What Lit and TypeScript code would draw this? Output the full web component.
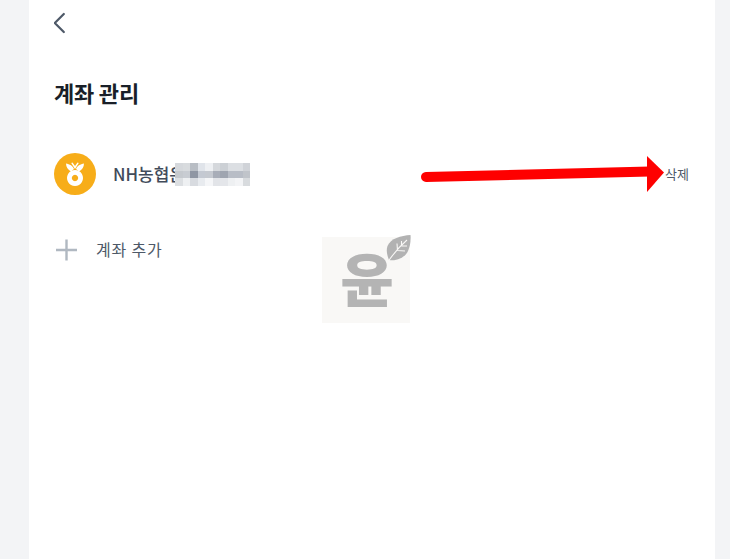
import { LitElement, html, css, svg } from "lit";
import { customElement } from "lit/decorators.js";

const MOSAIC = [
  ["#d5d8dc", "#d8dbde", "#b8bdc4", "#e0e4ea", "#eef0f3", "#d5d8dc", "#ccd0d5", "#dcdfe3", "#dcdfe3", "#d0d3d8"],
  ["#c5c9ce", "#c8ccd2", "#8f96a3", "#c4c9d2", "#c5c9d0", "#a8adb8", "#9fa5b0", "#b8bdc6", "#b8bdc6", "#c0c4ca"],
  ["#dcdfe2", "#eef0f2", "#d8dbe0", "#e8ebef", "#f5f6f8", "#e2e4e8", "#e4e6ea", "#eef0f2", "#f3f4f6", "#d8dbde"],
];

@customElement("app-root")
export class AppRoot extends LitElement {
  static styles = css`
    :host {
      display: block;
      height: 559px;
      overflow: hidden;
      position: relative;
      background: #f3f4f6;
      font-family: "Noto Sans CJK KR", "Noto Sans", sans-serif;
    }
    .panel {
      margin: 0 15px 0 29px;
      height: 559px;
      box-sizing: border-box;
      background: #fff;
      padding: 12px 26px 0 25px;
      display: flex;
      flex-direction: column;
    }
    .back {
      display: block;
      width: 12px;
      height: 22px;
    }
    .title {
      margin: 43px 0 0;
      font-size: 22px;
      line-height: 30px;
      font-weight: 700;
      letter-spacing: -0.2px;
      color: #191f28;
    }
    .account {
      margin-top: 46px;
      display: flex;
      align-items: center;
      height: 42px;
    }
    .bank {
      width: 42px;
      height: 42px;
      flex: none;
      display: block;
    }
    .name {
      position: relative;
      margin-left: 17px;
      width: 137px;
      height: 24px;
      font-size: 17px;
      line-height: 24px;
      font-weight: 500;
      color: #414b5a;
      white-space: nowrap;
      overflow: hidden;
    }
    .mosaic {
      position: absolute;
      left: 62px;
      top: 1px;
      width: 75px;
      height: 23px;
      display: grid;
      grid-template-columns: repeat(10, 1fr);
      grid-template-rows: repeat(3, 1fr);
    }
    .delete {
      margin-left: auto;
      font-size: 13px;
      line-height: 18px;
      color: #4e5968;
    }
    .add {
      margin-top: 41px;
      display: flex;
      align-items: center;
      height: 28px;
    }
    .plus {
      width: 24px;
      height: 24px;
      flex: none;
      display: block;
    }
    .add span {
      margin-left: 18px;
      font-size: 16px;
      line-height: 24px;
      letter-spacing: 0.8px;
      color: #4e5968;
      position: relative;
      top: -1px;
    }
    .arrow {
      position: absolute;
      left: 415px;
      top: 150px;
      width: 255px;
      height: 48px;
    }
    .mark {
      position: absolute;
      left: 322px;
      top: 237px;
      width: 88px;
      height: 86px;
      background: #f9f8f6;
      display: flex;
      align-items: center;
      justify-content: center;
    }
    .mark b {
      font-size: 58px;
      line-height: 70px;
      font-weight: 900;
      color: #b4b4b4;
      position: relative;
      left: 1px;
      top: -3px;
    }
    .leaf {
      position: absolute;
      left: 64px;
      top: -2px;
      width: 25px;
      height: 27px;
    }
  `;

  render() {
    return html`
      <div class="panel">
        <svg class="back" viewBox="0 0 12 22" fill="none" stroke="#4e5968" stroke-width="2.2" stroke-linecap="round" stroke-linejoin="round">
          <path d="M9.800 2 .8 11l9 9" />
        </svg>
        <h1 class="title">계좌 관리</h1>
        <div class="account">
          <svg class="bank" viewBox="0 0 42 42">
            <circle cx="21" cy="21" r="21" fill="#f7ad19" />
            <path d="M21 17a8 8 0 1 0 .01 0zm0 4.800a3.200 3.200 0 1 1-.01 0z" fill="#fff" fill-rule="evenodd" />
            <path d="M12 10.500c3.500.5 7 2.500 8 5.500l-3 2.500c-3-1.500-5-4.500-5-8zM30 10.500c-3.500.5-7 2.500-8 5.500l3 2.500c3-1.500 5-4.500 5-8zM18.500 9.500 21 13l2.500-3.500 1.300.6L21 16l-3.800-5.900z" fill="#fff" />
          </svg>
          <div class="name">
            NH농협은행
            <div class="mosaic">
              ${MOSAIC.flat().map((c) => html`<i style="background:${c}"></i>`)}
            </div>
          </div>
          <span class="delete">삭제</span>
        </div>
        <div class="add">
          <svg class="plus" viewBox="0 0 24 24" stroke="#b0b8c1" stroke-width="2.4">
            <path d="M2 12h21M12.500 1.500v21" />
          </svg>
          <span>계좌 추가</span>
        </div>
      </div>

      <svg class="arrow" viewBox="415 150 255 48">
        <path d="M426 177 650 171.500" stroke="#fe0000" stroke-width="10" stroke-linecap="round" fill="none" />
        <path d="M647 156 664 172.500 647 192z" fill="#fe0000" />
      </svg>

      <div class="mark">
        <b>윤</b>
        <svg class="leaf" viewBox="0 0 25 27">
          ${svg`
            <path d="M24.500 0C15 .5 4.500 3.500 1.500 11 0 15.500 1 20 3 25 10.500 26.500 19 22.500 22 16 24 11.500 25 6 24.500 0z" fill="#b2b2b2" />
            <path d="M2.500 26C8 18 14 11 21 5M11.500 15.500 11 8.500M15.500 11 15.500 6M11.500 15.500 19 16M15.500 11 21 11" stroke="#f9f8f6" stroke-width="1.100" fill="none" />
          `}
        </svg>
      </div>
    `;
  }
}
